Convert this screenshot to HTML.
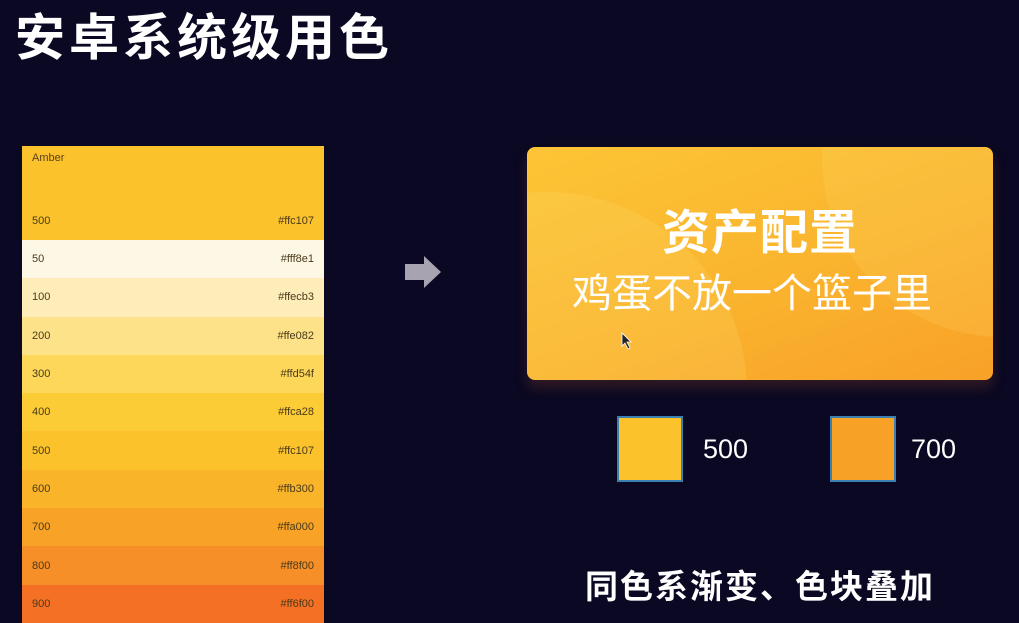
<!DOCTYPE html>
<html><head><meta charset="utf-8"><style>
*{margin:0;padding:0;box-sizing:border-box}
body{width:1019px;height:623px;background:#0a0822;position:relative;overflow:hidden;font-family:"Liberation Sans","Noto Sans CJK SC",sans-serif}
.t{position:absolute;left:15px;top:3px;color:#fff;font-size:50px;font-weight:bold;letter-spacing:4px;line-height:70px}
.sw{position:absolute;left:22px;top:146px;width:302px}
.row{height:38.3px;display:flex;justify-content:space-between;align-items:center;padding:0 10px;font-size:11px;color:#4a3a1a}
.hd{height:94px;background:#fbc22c;position:relative}
.hd .a{position:absolute;left:10px;top:6px;font-size:11px;color:#5a4018}
.hd .b{position:absolute;left:10px;right:10px;top:69px;display:flex;justify-content:space-between;font-size:11px;color:#4a3a18}
.card{position:absolute;left:527px;top:147px;width:466px;height:233px;border-radius:8px;overflow:hidden;background:linear-gradient(160deg,#fcc536 0%,#fab42e 55%,#f8a128 100%);box-shadow:0 8px 12px rgba(120,60,40,.35)}
.c1{position:absolute;left:-180px;top:45px;width:400px;height:400px;border-radius:50%;background:rgba(255,230,120,.18)}
.c2{position:absolute;left:295px;top:-170px;width:360px;height:360px;border-radius:50%;background:rgba(255,230,130,.15)}
.h1{position:absolute;left:0;right:0;top:58px;text-align:center;color:#fff;font-size:48px;font-weight:bold;line-height:58px;letter-spacing:1px}
.h2{position:absolute;left:45px;top:122px;color:#fff;font-size:40px;line-height:50px}
.sq{position:absolute;top:416px;width:66px;height:66px;border:2px solid #3b80b0}
.lb{position:absolute;top:432px;color:#fff;font-size:27px;line-height:34px}
.bt{position:absolute;left:585px;top:564px;color:#fff;font-size:33px;font-weight:bold;line-height:46px;letter-spacing:2px}
</style></head><body>
<div class="t">安卓系统级用色</div>
<div class="sw">
<div class="hd"><div class="a">Amber</div><div class="b"><span>500</span><span>#ffc107</span></div></div>
<div class="row" style="background:#fdf7e6"><span>50</span><span>#fff8e1</span></div>
<div class="row" style="background:#feecb9"><span>100</span><span>#ffecb3</span></div>
<div class="row" style="background:#fde28a"><span>200</span><span>#ffe082</span></div>
<div class="row" style="background:#fcd75a"><span>300</span><span>#ffd54f</span></div>
<div class="row" style="background:#fbcc36"><span>400</span><span>#ffca28</span></div>
<div class="row" style="background:#fbc22c"><span>500</span><span>#ffc107</span></div>
<div class="row" style="background:#f9b42a"><span>600</span><span>#ffb300</span></div>
<div class="row" style="background:#f8a325"><span>700</span><span>#ffa000</span></div>
<div class="row" style="background:#f68f27"><span>800</span><span>#ff8f00</span></div>
<div class="row" style="background:#f47024"><span>900</span><span>#ff6f00</span></div>
</div>
<svg style="position:absolute;left:404px;top:254px" width="40" height="36"><polygon points="1,10 20,10 20,2 37,18 20,34 20,26 1,26" fill="#a8a3b0"/></svg>
<div class="card"><div class="c1"></div><div class="c2"></div>
<div class="h1">资产配置</div><div class="h2">鸡蛋不放一个篮子里</div>
<svg style="position:absolute;left:94px;top:185px" width="12" height="18"><polygon points="1,1 1,14 4,11 7,17 9,16 6,10 10,10" fill="#222" stroke="#fff" stroke-width=".8"/></svg>
</div>
<div class="sq" style="left:617px;background:#fbc22c"></div><div class="lb" style="left:703px">500</div>
<div class="sq" style="left:830px;background:#f8a127"></div><div class="lb" style="left:911px">700</div>
<div class="bt">同色系渐变、色块叠加</div>
</body></html>
